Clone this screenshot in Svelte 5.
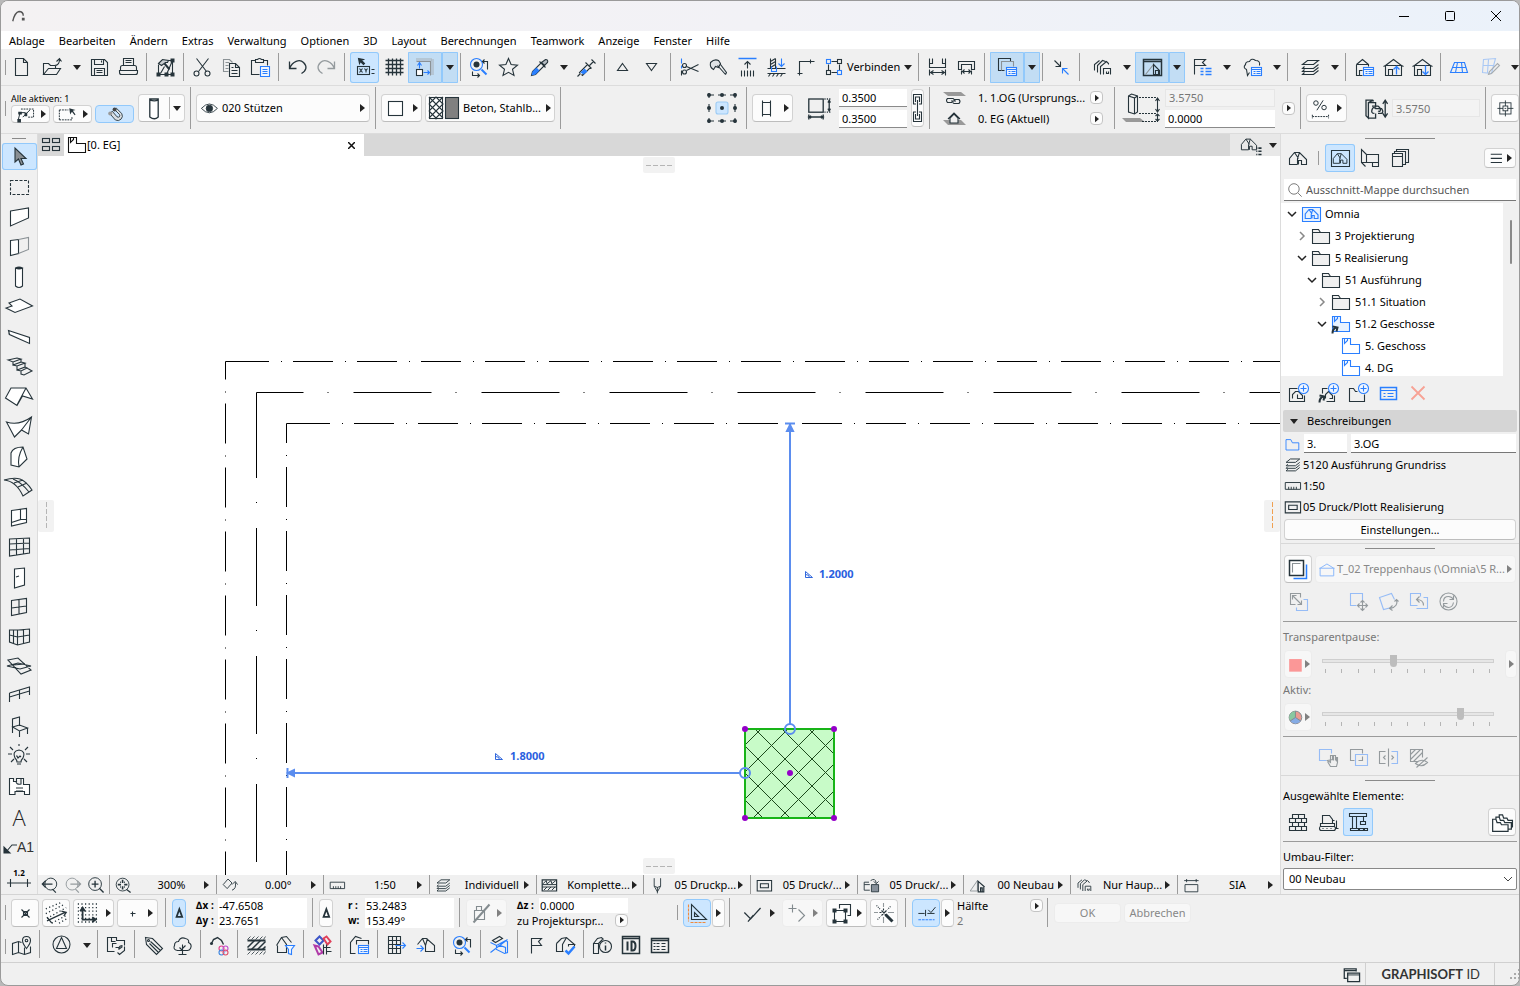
<script lang="ts">
  type Tool = { icon: string; drop?: boolean; active?: boolean; text?: string; off?: boolean };

  const menus = ['Ablage', 'Bearbeiten', 'Ändern', 'Extras', 'Verwaltung', 'Optionen', '3D', 'Layout', 'Berechnungen', 'Teamwork', 'Anzeige', 'Fenster', 'Hilfe'];

  const B = 'stroke="#2a7fff"';
  const BF = 'fill="#2a7fff" stroke="none"';
  const F = 'fill="currentColor" stroke="none"';
  const G = 'stroke="#8b9296"';

  const listBadge = `<rect x="9" y="10" width="10" height="8" fill="#f0f6ff" ${B}/><path d="M9 12h10M11 14h2m1 0h4M11 16h2m1 0h4" ${B}/>`;
  const house = '<path d="M2 8l8-6 8 6v10H2zM0 9l2-1M20 9l-2-1M2 8h16M5 18v-6h4v6"/>';
  const storey = '<path d="M1 2v15h17V8H9V2zM3 2v5l3-3V2"/>';
  const gable = '<path d="M9 16H1V10L6 4h5l7 7v5h-5v-4h-3v4M6 4l4 6M11 4l-2 6v6"/>';
  const plusBadge = `<circle cx="15" cy="5" r="5" fill="#f0f6ff" ${B}/><path d="M12 5h6M15 2v6" ${B}/>`;

  // inner markup of every 20 x 20 symbol
  const icons: Record<string, string> = {
    new: '<path d="M4 1h8l4 4v13H4zM12 1v4h4"/>',
    open: '<path d="M1 17V6h5l2 2h5v3M1 17l5-6h12l-4 6zM12 8c4 0 5-2 5-6M14 4l3-3 2 3"/>',
    save: '<path d="M2 2h13l3 3v13H2zM5 2v5h9V2M5 18v-7h10v7M12 3v2M7 13h6M7 15h6"/>',
    print: '<path d="M5 8V1h10v7M7 3h6M7 5h6M4 8h12q2 0 2 2v3H2v-3q0-2 2-2zM1 13h18v2q0 2-2 2H3q-2 0-2-2z"/>',
    build: `<path d="M3 7v10h14V3h-4M17 3l-6 14M9 9L5 16"/><path d="M3 6l4-4 6 1-1 2-2 0-4 3z" fill="#c9ced1"/><path d="M9 6l5 6" stroke-width="2"/><path d="M1 15h4v4H1zM9 15h4v4H9zM15 15h4v4h-4zM15 1h4v4h-4z" ${F}/>`,
    cut: '<path d="M4 1l10 13M16 1L6 14"/><circle cx="4" cy="16" r="2.5"/><circle cx="15" cy="16" r="2.5"/>',
    copy: `<path d="M7 14H2V2h6l3 3M4 5h4M4 8h3M4 11h3" ${G}/><path d="M8 6h6l4 4v9H8zM14 6v4h4M10 10h2M10 13h6M10 16h6"/>`,
    paste: `<path d="M9 17H1V3h4M13 3h4v5M5 5V2h2q2-2 4 0h2v3z"/><path d="M10 9h9v10h-9z" fill="#f0f6ff" ${B}/><path d="M12 12h5M12 14h5M12 16h5" ${B}/>`,
    undo: '<path d="M2 4v7h7M2 11C5 4 12 1 16 5s3 8-2 11" stroke-width="1.3"/>',
    redo: '<path d="M18 4v7h-7M18 11C15 4 8 1 4 5s-3 8 2 11" stroke-width="1.3"/>',
    xy: `<path d="M3 1l5 1-2 1 3 3-1 1-3-3-1 2z" fill="currentColor"/><rect x="2" y="9" width="12" height="8"/><path d="M4 11l3 4m0-4l-3 4M9 11l1.5 2 1.5-2M10.5 13v2M16 12h3M16 16h3"/>`,
    grid: '<path d="M4 1v17M8 1v17M12 1v17M16 1v17M1 3h18M1 7h18M1 11h18M1 15h18" stroke-width="1.3"/>',
    guide: `<path d="M1 2h16v15" stroke="#a7b0b6" stroke-width="3" stroke-dasharray="1 1"/><path d="M1 4h14v14" ${G}/><rect x="1" y="12" width="6" height="6" fill="#fff"/><path d="M4 11V5m-2 3l2-3 2 3M8 15h6m-2-2l2 2-2 2" ${B}/>`,
    find: `<circle cx="7" cy="7" r="6" ${B}/><circle cx="7" cy="7" r="3" ${F}/><path d="M12 12l5 5" ${B} stroke-width="2"/><path d="M13 4h5v8M15 2l-2 2 2 2M3 14v4h7M8 16l2 2-2 2"/>`,
    star: '<path d="M10 1l2.600 6 6.400.6-5 4.200 1.500 6.200-5.500-3.200L4.500 18 6 11.800l-5-4.200L7.400 7z"/>',
    pipette: `<path d="M2 18l1-4 9-9 3 3-9 9z"/><path d="M2 18l1-4 4-4 3 3-4 4z" ${BF}/><path d="M10 4l6 6M12 5l4-3q3 0 2 3l-3 3z" fill="#b5bcc2"/>`,
    syringe: `<path d="M1 19l3-3M4 16l-1-1 8-8 3 3-8 8-1-1M9 5l6 6M13 8l4-4M15 2l4 4"/><path d="M4 15l4-4 3 3-4 3z" ${BF}/>`,
    up: '<path d="M9 6l5 7H4z"/>',
    down: '<path d="M9 13l5-7H4z"/>',
    trim: `<path d="M2 1v5M2 8v3" ${B}/><path d="M2 13v5M19 7L7 13M19 14L7 9"/><circle cx="5" cy="14.500" r="2"/><circle cx="5" cy="8" r="2"/>`,
    axe: '<path d="M2 5q4-4 8-2l2 3-2 4-3-1-2 3q-4-2-3-7zM9 8l8 9M12 7l6 8-1 2" fill="#dfe3e6"/>',
    extend: `<path d="M1 1h18" ${B} stroke-width="1.5"/><path d="M10 4v7M7 7l3-3 3 3M4 13v6M7 13v6M10 13v6M13 13v6M16 13v6"/>`,
    adjust: `<path d="M4 1v10M9 1v10M4 4l5-3M4 7l5-3M4 10l5-3M1 11h18M1 16h18M2 19l2-3M6 19l2-3M10 19l2-3M14 19l2-3"/><path d="M15 1v8M12 6l3 3 3-3M5 9v5h5V9" ${B}/>`,
    corner: '<path d="M4 18V4h15M2 16h5M15 2v4"/>',
    connect: `<path d="M7 4h6M4 7v6M7 15h6M15 7v6"/><rect x="2" y="2" width="4" height="4" ${B}/><rect x="13" y="2" width="4" height="4"/><rect x="2" y="13" width="4" height="4"/><rect x="13" y="13" width="4" height="4" ${B}/>`,
    measure: '<path d="M2 1v9h16V1M2 6h3V1M15 1v5h3M2 12v6M18 12v6M3 15h14M6 13l-3 2 3 2M14 13l3 2-3 2"/>',
    measure2: '<path d="M2 12V4h16v8h-3V7H5v5zM5 13v4M15 13v4M6 14h8M8 12l-2 2 2 2M12 12l2 2-2 2"/>',
    traceref: `<path d="M7 13H1V1h12v3"/><path d="M4 13V4h12v5" ${G}/>${listBadge}`,
    compress: `<path d="M3 3l6 6M9 4v5H4"/><path d="M17 17l-6-6M11 16v-5h5" ${B}/>`,
    ghost: '<path d="M2 13V7l5-4M5 15V8l5-5 3 1M8 17V9l6-5 2 2v1M11 17v-6h7v6M14 14v2h2v-2"/>',
    home3d: `<path d="M1 2h18v16H1zM1 4h18" stroke-width="1.5"/><path d="M3 17l8-10v10" ${G}/><path d="M11 7l6 6v4h-6zM13 17v-4h3v4"/>`,
    flist: `<path d="M2 17V2h11l-3 3 3 3H2"/><path d="M8 11h3M13 11h6M8 14h3M13 14h6M8 17h3M13 17h6" ${B} stroke-width="1.5"/>`,
    cloud: `<path d="M7 15L5 18 4 12Q0 10 3 7q0-3 4-3 2-4 6-1 5 0 4 5"/>${listBadge}`,
    layers: '<path d="M2 7l5-4h11l-5 4zM4 9l-2 2h11l5-4M4 12l-2 2h11l5-4M4 15l-2 2h11l5-4"/>',
    hlist: `<path d="M2 7l6-5 6 5M2 7h12v2M2 7v11h6M5 18v-5h3"/>${listBadge}`,
    hup: house + `<path d="M13 17V9M10 12l3-3 3 3" ${B} stroke-width="1.3"/>`,
    hdown: house + `<path d="M13 8v9M10 14l3 3 3-3" ${B} stroke-width="1.3"/>`,
    plane: `<path d="M5 5h10l3 10H1zM3 10h14M8 5L6 15M12 5l1 10" ${B}/>`,
    plane2: `<path d="M3 2l12-1-4 15-9-1zM3 8h11M8 2L7 15" stroke="#a9c8f5"/><path d="M8 17l1-3 8-8 2 2-8 8z" stroke="#a8adb0"/>`,
    arrowbox: '<path d="M2 16l2-8h6M7 13l8-8"/><path d="M5 4h14v9h-6" stroke-dasharray="2 1"/><path d="M1 15h4v4H1zM2 7h4v3H2zM9 8h3v4H9z" fill="currentColor" stroke="none"/>',
    selectbox: '<path d="M1 5h10M1 16h14v-4M1 5v11" stroke-dasharray="2 1"/><path d="M12 3l7 2-3 1 3 4-1 1-3-4-2 3z" fill="currentColor" stroke="none"/>',
    magnet: '<path d="M3 9l3-3 6 7q2 1 3 0t0-3L9 4l2-2 7 7q2 4-1 7t-7 1z" fill="#d9dee2"/><circle cx="9" cy="4" r="2.5" fill="#444" stroke="none"/><circle cx="3.5" cy="9" r="2.5" fill="#999" stroke="none"/>',
    column: '<path d="M6 2v15q4 3 7 0V2zM6 3q4 1 7 0" fill="#fff"/>',
    eye: '<path d="M0 10q10-11 20 0-10 11-20 0z"/><circle cx="10" cy="10" r="4" fill="currentColor"/>',
    square: '<rect x="3" y="3" width="14" height="14" fill="#fff"/>',
    profile: '<path d="M6 2v16M14 2v16M6 4h8M6 16h8"/>',
    size: '<rect x="1" y="2" width="12" height="11"/><path d="M14 2h6M14 13h6" stroke-dasharray="1 1"/><path d="M18 3v9M17 5l1-2 1 2M17 10l1 2 1-2M1 17h12M1 15v4M13 15v4M3 16l-2 1 2 1M11 16l2 1-2 1"/>',
    percent: '<path d="M1 17v4M19 17v4M1 19h18" stroke-dasharray="2 1"/><path d="M6 12l7-11"/><circle cx="5" cy="4" r="2.5"/><circle cx="14" cy="9" r="2.5"/>',
    linkheight: '<path d="M2 3v13l2 2V5l4-2H2zM8 3v1M18 3v14M16 6l2-3 2 3M16 14l2 3 2-3M4 5h6v4M10 14v4H4M7 8h5q2 1 2 3t-2 1M9 14q-3 0-2-3t3-1h5q2 3 0 4h-3"/>',
    target: '<rect x="3" y="3" width="14" height="14"/><rect x="7" y="7" width="6" height="6"/><path d="M10 0v7M10 13v7M0 10h7M13 10h7M9 10h2"/>',
    tiles: '<rect x="1" y="3" width="7" height="4"/><rect x="11" y="3" width="7" height="4"/><rect x="1" y="11" width="7" height="4"/><rect x="11" y="11" width="7" height="4"/>',
    storey,
    storeyblue: `<g ${B}>${storey}</g>`,
    storeylink: `<g ${B} fill="#e8f2ff">${storey}</g><path d="M1 19q0-5 4-6M1 12l5 1-1 4" stroke-width="2"/>`,
    house: gable,
    housebox: `<path d="M1 2h18v16H1z"/><g transform="translate(2 2) scale(.8)" stroke-width="1.2">${gable}</g>`,
    mapview: `<g ${B}><path d="M1 3h18v14H1z" fill="#e8f2ff"/><g transform="translate(3 2) scale(.75)" stroke-width="1.5">${gable}</g></g>`,
    layout: '<path d="M6 6L1 1v13l4 4M1 14h5M6 6h12v12h-6v-4H6zM6 6v8M12 14h6"/>',
    stack: '<path d="M2 5h10v13H2zM2 8h10M4 5V3h11v13h-3M6 3V1h12v13h-3"/>',
    folder: '<path d="M1 17V3h6l2 3h9v11zM1 6h8" fill="#f0f0f0"/>',
    homelist: `<g transform="scale(.85)">${gable}</g><path d="M15 12h1m1 0h3M15 15h1m1 0h3M15 18h1m1 0h3" stroke-width="1.5"/>`,
    addview: `<path d="M9 5H1v13h15v-6"/><path d="M4 15v-4l3-3h3l4 4v3H9v-4"/>${plusBadge}`,
    addlink: `<path d="M9 5H4v5M8 18h8v-6M7 15v-4l3-3 4 4v3h-3"/><path d="M1 19q0-5 4-6M1 12l5 1-1 4" stroke-width="2"/>${plusBadge}`,
    addfolder: `<path d="M9 8H7L5 5H1v13h15v-7"/>${plusBadge}`,
    props: `<path d="M2 4h16v12H2z" ${B} stroke-width="1.5"/><path d="M2 7h16M5 10h2m2 0h6M5 13h2m2 0h6" ${B}/>`,
    cross: '<path d="M3 3l13 13M16 3L3 16" stroke="#f7a295" stroke-width="1.8"/>',
    storeytab: `<path d="M2 4h6l2 4h8v9H2z" ${B}/>`,
    ruler: '<path d="M1 6h18v8H1zM5 14v-3M8 14v-3M11 14v-3M14 14v-3"/>',
    frame: '<path d="M1 4h18v13H1zM5 8h10v5H5z" stroke-width="1.3"/>',
    trace: `<path d="M5 19h13V5" ${B} stroke-width="1.5"/><path d="M1 1h14v15H1z" fill="#fff" stroke-width="1.5"/><path d="M4 13V4h8" ${G}/>`,
    outline: `<path d="M2 17V8l8-5 8 5v9zM1 8h18" ${B}/>`,
    switchref: `<path d="M12 6V2H2v11h5M4 4l9 9M4 8V4h4M13 9v4H9"/><path d="M15 8h4v11H8v-3" ${B}/>`,
    moveref: `<path d="M8 14H2V2h12v7" ${B}/><path d="M14 9v10M9 14h10M12 11l2-2 2 2M12 17l2 2 2-2M11 12l-2 2 2 2M17 12l2 2-2 2"/>`,
    rotref: `<path d="M13 16l-8 2L1 6l12-4 3 6" ${B}/><path d="M18 8q2 7-6 9M16 10l2-2 2 2M14 14l-3 3 3 2"/>`,
    resetref: `<path d="M9 14H2V2h10v3M8 17h11V6h-4" ${B}/><path d="M15 14q0-6-7-6M11 5L8 8l3 3"/>`,
    refresh: '<circle cx="10" cy="10" r="8.5"/><path d="M5 10q0-5 5-5 3 0 5 3M15 4v4h-4M15 11q-1 5-5 5-3 0-5-3M5 16v-4h4"/>',
    swatch: '<path d="M3 4h14v14H3z" fill="#ff4a4a" stroke="none"/>',
    wheel: '<circle cx="10" cy="10" r="7" fill="#e0503f"/><path d="M10 10V3a7 7 0 0 0-6 10.500z" fill="#2fa35c" stroke="none"/><path d="M10 10l-6 3.500a7 7 0 0 0 12 0z" fill="#2a6fd8" stroke="none"/><path d="M10 3v7l-6 4M10 10l6 4"/>',
    grab: `<path d="M8 13H1V2h12v4" ${B}/><path d="M9 14l3 5h6l1-4V10h-1v4M17 13V8h-2v5M14 12V8h-2v7l-3-2z"/>`,
    overlap: `<path d="M6 13H2V2h12v4"/><path d="M7 7h12v11H7z" ${B}/><path d="M10 13h4V9"/>`,
    splitview: `<path d="M7 4H1v12h6M10 1v18M7 8l-2 2 2 2M13 8l2 2-2 2"/><path d="M13 4h6v12h-6" ${B}/>`,
    hidehatch: '<path d="M9 14H2V2h12v8M2 7l5-5M2 12L12 2M5 14l9-9M7 16q6-6 12-1-6 6-12 1zM8 20L19 10"/>',
    bricks: '<path d="M4 2h12v4H4zM1 6h17v4H1zM4 10h12v4H4zM1 14h17v4H1zM10 2v4M7 6v4M13 6v4M10 10v4M7 14v4M13 14v4"/>',
    digger: '<path d="M4 11V3h7l3 4v4M2 14v-3h14v3zM14 8h2M18 8v8h2M2 14h13q2 0 2 2t-2 2H3q-2 0-2-2t1-2zM4 16h1M8 16h1M12 16h1"/>',
    crane: '<path d="M1 1h17v3H1zM4 4v12M8 4v12M2 18h8v-2H2zM15 4v5M12 9h5v3h-5zM11 16h4v2h-4zM16 16h3v2h-3z"/>',
    storeys: '<path d="M1 18V7h3l1 3h3l1 2h6v6zM4 7V5h3l1 3h3l1 2h6v6h-3M7 5V3h3l1 3h3l1 2h4v6h-1"/>',
    zoomback: '<circle cx="11" cy="9" r="7"/><path d="M13 15l4 4M13 9H1M5 5L1 9l4 4" stroke-width="1.4"/>',
    zoomfwd: '<circle cx="9" cy="9" r="7"/><path d="M13 15l4 4M7 9h12M15 5l4 4-4 4" stroke-width="1.4"/>',
    zoomin: '<circle cx="9" cy="9" r="7.5"/><path d="M14 14l5 5M5 9h8M9 5v8" stroke-width="1.6"/>',
    zoomfit: '<circle cx="9" cy="9" r="8"/><path d="M14 15l5 4" stroke-width="1.6"/><path d="M9 3v4M9 11v4M3 9h4M11 9h4M6 6h1M11 6h1M6 12h1M11 12h1" stroke-width="2"/>',
    orient: '<path d="M7 2L1 9l5 5 6-7zM12 16q6-2 4-10M12 9l4-4 3 4"/>',
    hatchbox: '<path d="M1 3h18v14H1z" stroke-width="1.5"/><path d="M2 8l4-4 1 4 5-4 1 4 5-4M1 9h18M1 12h18M3 16l4-4M8 16l4-4M13 16l4-4" stroke-width="1.2"/>',
    pen: '<path d="M6 1v10l4 7 4-7V1M10 12v8M6 11q4 3 8 0"/>',
    override: '<path d="M8 16H1V6h6M1 9h7"/><path d="M10 9h9v9h-9z" fill="#87909a"/><path d="M9 4q6-4 7 3M13 5l3 3 3-3"/>',
    reno: `<path d="M1 17L10 4v13z" ${G}/><path d="M10 4l9 8M11 6v12h7v-6M14 18v-5h2v5" stroke-width="1.5"/>`,
    dims: '<path d="M2 9h16v9H2zM1 4h18M4 2v4M16 2v4"/>',
    snap: '<path d="M6 6l8 8M14 6l-8 8M8 8h4v4H8z"/>',
    snaplines: '<path d="M1 6l12-5M1 10l16-8M2 14l16-9M6 18l13-7M12 18l7-4" stroke-dasharray="1 2"/><path d="M2 16l15-7M2 13l4 5M14 8l4 1-2 3"/>',
    snapgrid: '<path d="M1 2h18M1 5h18M1 8h18M1 11h18M1 14h18M1 17h18" stroke-dasharray="1 2"/><path d="M5 6v9h10M3 8l2-3 2 3M13 13l3 2-3 2" stroke-width="1.5"/>',
    plus: '<path d="M10 8v5M8 10h5"/>',
    delta: '<path d="M10 4l4 11H6z" stroke-width="2.5"/>',
    lockpen: '<path d="M3 7h10v9H3zM5 7V3h5v4"/><path d="M2 19L18 1" stroke-width="2"/>',
    setsquare: '<path d="M1 1v17M3 19h16" stroke="#f08a3c" stroke-dasharray="3 1"/><path d="M4 1v15h15zM7 9v4h4z"/>',
    tick: '<path d="M1 9l7 7L19 4M5 19l6-7" stroke-width="1.4"/>',
    zigzag: '<path d="M5 1v8M1 5h8M11 6l6 6-6 6"/>',
    boxes: '<path d="M8 5V1h11v11h-3"/><path d="M3 7h11v11H3z"/><path d="M1 5h4v4H1zM12 5h4v4h-4zM1 16h4v4H1zM12 16h4v4h-4z" fill="currentColor" stroke="none"/>',
    wand: '<path d="M11 11l7 7" stroke-width="3"/><path d="M7 7l5 5M12 7l-5 5M9 5v2M5 9h2"/><path d="M9 0v4M2 2l4 4M0 9h4M3 16l3-3M9 19v-5M16 3l-3 3M19 9h-5" stroke-dasharray="1 1"/>',
    half: `<path d="M1 10h7M11 10h8M9 6v7M12 6l3 3 5-6"/><path d="M1 17h18" ${B} stroke-dasharray="3 1"/>`,
    mapbook: '<path d="M10 7L7 6 1 8v11l6-2 6 2 6-2v-6M7 6v11M13 12v7"/><path d="M15 13q-4-5-4-8 0-4 4-4t4 4q0 3-4 8z"/><circle cx="15" cy="5" r="1.3"/>',
    north: '<circle cx="9" cy="9" r="8.5"/><path d="M9 2l5 11H4z"/>',
    drawing: '<path d="M8 16H1V2h9v3h8v5M5 2v4h4M10 8H6v4M12 12h-3M12 13q1-3 4-3M11 17l2 2 5-4v-4M16 11l-4 3"/>',
    tag: '<path d="M2 2l7 1 10 10-6 6L3 9zM7 6l10 9M6 8l9 9"/><circle cx="5" cy="5" r="1"/>',
    tree: '<path d="M10 19V9M10 13l3-3M10 15l-3-3M5 15Q0 14 2 10q0-4 4-4 2-5 7-3 4 1 3 4 4 2 2 6-1 2-3 2zM6 19h8"/>',
    zoneflower: `<path d="M2 8l2-4 4-2 4 3 2 4" stroke-width="1.4"/><circle cx="2" cy="8" r="1.5" ${F}/><circle cx="12" cy="13" r="2.5" stroke="#e0408a"/><circle cx="16" cy="13" r="2.5" stroke="#c04fd0"/><circle cx="12" cy="17" r="2.5" stroke="#3a86e0"/><circle cx="16" cy="17" r="2.5" stroke="#e0506a"/>`,
    hatches: '<path d="M1 4l3-3M5 4l3-3M9 4l3-3M13 4l3-3M17 4l2-3M1 19l3-3M5 19l3-3M9 19l3-3M13 19l3-3M17 19l2-3" stroke-width=".8"/><path d="M1 5h18M1 14h18" stroke-width="1.8"/><path d="M1 12l7-7M5 14l9-9M11 14l8-8M16 14l3-3" stroke-width="1.5"/>',
    housefilter: `<path d="M1 10l5-8 5-1 5 6M6 2l5 7v8H2v-7"/><path d="M10 10h9l-3 4v5l-3-1v-4z" fill="#f0f6ff" ${B}/>`,
    cluster: '<path d="M3 5l4-4 4 4-4 4z" stroke="#3d55c8" stroke-width="2"/><path d="M11 3l3-2 4 5-3 3z" stroke="#e0405a" stroke-width="2"/><path d="M2 10l4 1 4 6-4 2z" stroke="#b03aa8" stroke-width="2"/><path d="M11 9v10M14 9v10M11 12h7M14 16h5"/>',
    boxlist: `<path d="M6 18H1V7l5-6 6 2M7 9V5h12v4"/>${listBadge}`,
    tableout: `<path d="M2 1h12v17H2zM2 5h12M2 9h12M2 13h12M6 1v17M10 1v17"/><path d="M9 10h10M16 7l3 3-3 3" ${B}/>`,
    homein: `<path d="M2 9l5-6h4l8 7v6h-9v-6L7 3M10 10l2-7"/><path d="M1 13h7M5 10l3 3-3 3" ${B}/>`,
    cutplane: `<path d="M3 5l7-4 3 2-7 4z"/><path d="M1 7l6 3 9-5 2 1v11l-3 1-8-4v-4M1 17L18 4M8 9l8 3v6" ${B}/>`,
    flag: '<path d="M5 18V3h10l-3 3 3 4H5"/>',
    housecheck: `<path d="M1 8l5-5 5-1 8 7h-6v2M1 8v8h7M11 2L7 9v7M19 9v2"/><path d="M10 15l3 3 6-7" ${B} stroke-width="2.5"/>`,
    info: '<path d="M1 8l4-5 4-1 2 2M1 8v10h5V8zM6 8l4-4"/><circle cx="13" cy="11" r="6" fill="#f0f0f0"/><path d="M13 10v5M13 7v1" stroke-width="1.5"/>',
    idbox: '<path d="M1 1h17v17H1zM1 3h17" stroke-width="1.5"/><path d="M6 6v9M10 6v9h1q3 0 3-4.500T11 6z" stroke-width="2"/>',
    listbox: '<path d="M1 3h17v14H1zM1 5h17" stroke-width="1.5"/><path d="M3 8h2m1 0h3m2 0h4M3 11h2m1 0h3m2 0h4M3 14h2m1 0h3m2 0h4"/>',
    windows: '<path d="M4 14H1V3h14v3M1 5h14" stroke-width="1.5"/><path d="M5 8h14v10H5z" stroke-width="1.5"/><path d="M5 10h14"/>',
    lens: '<circle cx="8" cy="8" r="7.5"/><path d="M14 14l5 5"/>',
    hamburger: '<path d="M2 4h16M2 10h16M2 16h16" stroke-width="1.5"/>',
    logo: '<path d="M2 17Q5 4 11 3q6 0 6 6" stroke-width="2" stroke="#555"/><path d="M15 12h4v4h-4z" fill="#555" stroke="none"/>',
  };

  // 30 x 30 symbols of the vertical toolbox
  const tools: [string, string][] = [
    ['Pfeil', '<path d="M11 6v14l3.500-3 2.500 6 2.500-1-2.500-5.500h5z" fill="#8a8f93"/>'],
    ['Markierung', '<path d="M6.500 8.500h18v14h-18z" stroke-dasharray="3 1.500"/>'],
    ['Wand', '<path d="M6.500 9l18-3v10l-18 8z" fill="#fff"/>'],
    ['Wandsystem', '<path d="M6.500 8.500l8-1v14l-8 2z" fill="#fff"/><path d="M14.500 7.500l10-2v12l-10 4" stroke="#8b9296"/>'],
    ['Stütze', '<path d="M11.500 6v18q3.500 3 7 0V6zM11.500 6q3.500 2 7 0-3.500-2-7 0" fill="#fff"/>'],
    ['Decke', '<path d="M5 11l11-4 12.500 7L11 20.500l-9-4.500 6-2z" fill="#fff"/>'],
    ['Unterzug', '<path d="M4.500 8.500l21 7v6l-20-9zM5 8.500v4" fill="#fff"/>'],
    ['Treppe', '<path d="M4 8l9-2 4 1-8 3zM9 10v3l8-3v-3M9 13l4 1 8-3-4-1M13 14v4l8-3v-4M13 18l4 1 6-3-2-1M17 19v3l3 1 8-4-5-3"/>'],
    ['Dach', '<path d="M7 6h15l6.500 11-10-3L13 23.500 1.500 16zM22 6l-9 17" fill="#fff"/>'],
    ['Schale', '<path d="M2.500 10Q15 14 27.500 5l-3 17-7-4-7 7zM17.500 18l10-13" fill="#fff"/>'],
    ['Schale 2', '<path d="M7 11q2-6 12-6l4 12-8 8-8-2zM15 25q-2-10 4-20" fill="#fff"/>'],
    ['Freifläche', '<path d="M0 8q10-3 16-1t12 11l-9 6Q12 9 0 8zM9 7q8 3 16 13M10 11l9-3M14 15l9-4"/>'],
    ['Öffnung', '<path d="M7.500 8.500l15-2v14l-15 3.500zM16.500 7.500v10l-9 3M16.500 17.500h6" fill="#fff"/>'],
    ['Fassade', '<path d="M5.500 7l20-1v15l-20 3zM5.500 12l20-1M5.500 18l20-1.500M12.500 7v16M19.500 6.500v15.500"/>'],
    ['Tür', '<path d="M10.500 7l10-1v17l-10 3z" fill="#fff"/><path d="M12 15l3-1"/>'],
    ['Fenster', '<path d="M7.500 8.500l15-2v14l-15 3zM15 7.500v14.500M7.500 16l15-2"/>'],
    ['Eckfenster', '<path d="M5.500 8h9l11-1v13l-12 3-8-3zM9.500 8v13M13.500 8v15M19.500 7v14M5.500 13l8 2 12-2"/>'],
    ['Dachfenster', '<path d="M4 8l10-2 13 12-10 4zM3 14l11-3 13 3-11 3zM9 13l12-1"/>'],
    ['Geländer', '<path d="M5.500 11l20-6v8M5.500 11v9M5.500 15l20-6M15.500 8v9"/>'],
    ['Objekt', '<path d="M8.500 21V7l7-2v9M8.500 15l7-2 8 3-8 3zM15.500 19v6M23.500 16v6"/>'],
    ['Lampe', '<path d="M13 20q0-2-2-4-3-7 4-8 7 1 4 8-2 2-2 4zM13 22h4M12 14h1l1 2 2-2 1 1M15 2v2M6 5l3 3M24 5l-3 3M4 12h4M22 12h4M7 20l3-3M23 20l-3-3"/>'],
    ['Raum', '<path d="M5.500 6.500h4v3h3v-3h7v6h6v10h-5v-3H11v3H5.500zM12 16h7M12 19h7M12 9q0 4 5 3V7" fill="#fff"/>'],
  ];

  const main: (Tool | '|')[] = [
    { icon: 'new' }, { icon: 'open', drop: true }, { icon: 'save' }, { icon: 'print' }, '|',
    { icon: 'build' }, '|', { icon: 'cut' }, { icon: 'copy' }, { icon: 'paste' }, '|',
    { icon: 'undo' }, { icon: 'redo', off: true }, '|', { icon: 'xy', active: true }, { icon: 'grid' },
    { icon: 'guide', drop: true, active: true }, '|', { icon: 'find' }, { icon: 'star' },
    { icon: 'pipette', drop: true }, { icon: 'syringe' }, '|', { icon: 'up' }, { icon: 'down' }, '|',
    { icon: 'trim' }, { icon: 'axe' }, { icon: 'extend' }, { icon: 'adjust' }, { icon: 'corner' },
    { icon: 'connect', text: 'Verbinden', drop: true }, '|', { icon: 'measure' }, { icon: 'measure2' }, '|',
    { icon: 'traceref', drop: true, active: true }, '|', { icon: 'compress' }, '|',
    { icon: 'ghost', drop: true }, { icon: 'home3d', drop: true, active: true }, { icon: 'flist', drop: true },
    { icon: 'cloud', drop: true }, '|', { icon: 'layers', drop: true }, '|',
    { icon: 'hlist' }, { icon: 'hup' }, { icon: 'hdown' }, '|', { icon: 'plane' }, { icon: 'plane2', drop: true },
  ];

  const extra: (Tool | '|')[] = [
    { icon: 'mapbook' }, '|', { icon: 'north', drop: true }, '|', { icon: 'drawing' }, '|',
    { icon: 'tag' }, { icon: 'tree' }, '|', { icon: 'zoneflower' }, '|', { icon: 'hatches' }, { icon: 'housefilter' }, '|',
    { icon: 'cluster' }, '|', { icon: 'boxlist' }, '|', { icon: 'tableout' }, { icon: 'homein' }, '|',
    { icon: 'find' }, '|', { icon: 'cutplane' }, '|', { icon: 'flag' }, { icon: 'housecheck' }, '|',
    { icon: 'info' }, { icon: 'idbox' }, { icon: 'listbox' },
  ];

  const quick = [
    ['zoomfit', '300%'], ['orient', '0.00°'], ['ruler', '1:50'], ['layers', 'Individuell'],
    ['hatchbox', 'Komplette...'], ['pen', '05 Druckp...'], ['frame', '05 Druck/...'], ['override', '05 Druck/...'],
    ['reno', '00 Neubau'], ['ghost', 'Nur Haup...'], ['dims', 'SIA'],
  ];

  const tree = [
    { depth: 0, open: true, icon: 'mapview', label: 'Omnia' },
    { depth: 1, open: false, icon: 'folder', label: '3 Projektierung' },
    { depth: 1, open: true, icon: 'folder', label: '5 Realisierung' },
    { depth: 2, open: true, icon: 'folder', label: '51 Ausführung' },
    { depth: 3, open: false, icon: 'folder', label: '51.1 Situation' },
    { depth: 3, open: true, icon: 'storeylink', label: '51.2 Geschosse' },
    { depth: 4, icon: 'storeyblue', label: '5. Geschoss' },
    { depth: 4, icon: 'storeyblue', label: '4. DG' },
  ];

  let search = $state('');
  let trace = $state(41);
  let aktiv = $state(82);
  let width = $state('0.3500');
  let depth = $state('0.3500');
  let topHeight = $state('3.5750');
  let offset = $state('0.0000');
</script>

{#snippet icon(name: string, size = 20)}
  <svg class="icon" width={size} height={size} viewBox="-.5 -.5 20 20" aria-hidden="true">{@html icons[name]}</svg>
{/snippet}

{#snippet right()}
  <svg class="tri" width="5" height="8" viewBox="0 0 5 8" aria-hidden="true"><path d="M0 0l5 4-5 4z" /></svg>
{/snippet}

{#snippet caret()}
  <svg class="tri" width="8" height="5" viewBox="0 0 8 5" aria-hidden="true"><path d="M0 0h8l-4 5z" /></svg>
{/snippet}

{#snippet toolRow(items: (Tool | '|')[])}
  {#each items as item}
    {#if item === '|'}
      <span class="sep"></span>
    {:else}
      <button class="tool" class:wide={item.drop && !item.text} class:text={item.text} class:active={item.active} class:off={item.off} aria-label={item.text ?? item.icon}>
        {@render icon(item.icon)}
        {#if item.text}<span>{item.text}</span>{/if}
      </button>
      {#if item.drop}
        <button class="drop" class:active={item.active} aria-label="{item.icon} Optionen">{@render caret()}</button>
      {/if}
    {/if}
  {/each}
{/snippet}

<div class="window">
  <header class="titlebar">
    <span class="logo">{@render icon('logo', 14)}</span>
    <div class="winbtns">
      <button aria-label="Minimieren"><svg width="10" height="10"><path d="M0 5.500h10" /></svg></button>
      <button aria-label="Maximieren"><svg width="10" height="10"><rect x=".5" y=".5" width="9" height="9" rx="1" /></svg></button>
      <button aria-label="Schliessen"><svg width="10" height="10"><path d="M0 0l10 10M10 0L0 10" /></svg></button>
    </div>
  </header>

  <nav class="menubar">
    {#each menus as m}<button>{m}</button>{/each}
  </nav>

  <div class="toolbar">
    <span class="grip"></span>
    {@render toolRow(main)}
  </div>

  <div class="infobar">
    <span class="grip"></span>
    <div class="sel">
      <span class="small">Alle aktiven: 1</span>
      <div class="row3">
        <button class="box low" aria-label="Auswahl">{@render icon('arrowbox', 18)}{@render right()}</button>
        <button class="box low" aria-label="Bereich">{@render icon('selectbox', 18)}{@render right()}</button>
        <button class="box low active" aria-label="Magnet">{@render icon('magnet', 16)}</button>
      </div>
    </div>
    <button class="box pillar" aria-label="Stütze">{@render icon('column', 24)}<i></i>{@render caret()}</button>
    <span class="line"></span>
    <button class="box layer">{@render icon('eye', 16)}<span>020 Stützen</span>{@render right()}</button>
    <span class="line"></span>
    <button class="box w41" aria-label="Darstellung">{@render icon('square')}{@render right()}</button>
    <button class="box beton">
      <svg class="icon" width="14" height="22" viewBox="0 0 14 22" aria-hidden="true">
        <rect x=".5" y=".5" width="13" height="21" fill="#fff" />
        <path d="M0 7l7-7 7 7-14 14M0 7l14 14M0 14L14 0M0 0l14 14-8 8M0 14l8 8" />
      </svg>
      <svg class="icon" width="14" height="22" viewBox="0 0 14 22" aria-hidden="true"><rect x=".5" y=".5" width="13" height="21" fill="#808080" /></svg>
      <span>Beton, Stahlb...</span>{@render right()}
    </button>
    <span class="line"></span>
    <svg class="icon anchor" width="32" height="32" viewBox="0 0 32 32" aria-hidden="true">
      <rect x="10" y="10" width="12" height="12" rx="2" fill="#cce6ff" stroke="#9ccbf5" />
      <path d="M3 3h5M12 3h8M24 3h5M3 29h5M12 29h8M24 29h5M3 1v5M29 1v5M3 12v8M29 12v8M3 26v5M29 26v5" />
      <g fill="currentColor" stroke="none">
        {#each [3, 16, 29] as x}{#each [3, 16, 29] as y}<circle cx={x} cy={y} r="2" />{/each}{/each}
      </g>
    </svg>
    <span class="line"></span>
    <button class="box w41" aria-label="Profil">{@render icon('profile')}{@render right()}</button>
    <span class="pad">{@render icon('size', 24)}</span>
    <div class="fields w68">
      <input aria-label="Breite" bind:value={width} />
      <input aria-label="Tiefe" bind:value={depth} />
    </div>
    <button class="box chain" aria-label="Verketten">
      <svg class="icon" width="9" height="30" viewBox="0 0 9 30" aria-hidden="true"><path d="M3 11H.5V1.500h8V11H6M3 19H.5v9.500h8V19H6M2.500 9V4h4v5M2.500 21v5h4v-5M4.500 7v16" /></svg>
    </button>
    <span class="line"></span>
    <div class="levels">
      <div><svg class="icon" width="23" height="14" viewBox="0 0 23 14" aria-hidden="true"><path d="M0 1h18l5 4H5z" fill="#999" stroke="none" /><path d="M9 11.500H4.500q-2-2 0-4H10q2 1 1 2.500H8M11 8.500h5q2 2 0 4h-5q-2-1-1-2.500h3" /></svg><span>1. 1.OG (Ursprungs...</span><button class="mini" aria-label="Ursprungsgeschoss">{@render right()}</button></div>
      <div><svg class="icon" width="23" height="14" viewBox="0 0 23 14" aria-hidden="true"><path d="M0 8h18l5 5H5z" fill="#999" stroke="none" /><path d="M7 11V6l4-4 4 4v5zM5 7l6-6 6 6" fill="#f0f0f0" /></svg><span>0. EG (Aktuell)</span><button class="mini" aria-label="Geschoss">{@render right()}</button></div>
    </div>
    <span class="line"></span>
    <svg class="icon heights" width="38" height="30" viewBox="0 0 38 30" aria-hidden="true">
      <path d="M0 25h18l5 4H4z" fill="#999" stroke="none" /><path d="M6.500 3l3-2 6 2v16l-3 2-6-2zM6.500 3l6 2v16M12.500 5l3-2" />
      <path d="M17 4.500h18M17 20.500h18M20 28.500h16" stroke-dasharray="2 1" /><path d="M35.500 5v14M33.500 8l2-3 2 3M33.500 16l2 3 2-3M35.500 21v7M33.500 23l2-2 2 2M33.500 26l2 2 2-2" />
    </svg>
    <div class="fields w110">
      <input class="dim" aria-label="Höhe" bind:value={topHeight} disabled />
      <input aria-label="Versatz" bind:value={offset} />
    </div>
    <button class="mini" aria-label="Höhen">{@render right()}</button>
    <span class="line"></span>
    <button class="box w41" aria-label="Prozent">{@render icon('percent', 18)}{@render right()}</button>
    <span class="pad link">{@render icon('linkheight', 24)}</span>
    <div class="fields w88"><input class="dim" aria-label="Verknüpfte Höhe" value="3.5750" disabled /></div>
    <span class="line"></span>
    <button class="box cut" aria-label="Ziel">{@render icon('target', 16)}</button>
  </div>

  <main class="work">
    <aside class="toolbox">
      <span class="handle short"></span>
      {#each tools as [name, markup], i}
        <button class:active={i === 0} aria-label={name}><svg class="icon" width="30" height="30" viewBox="0 0 30 30">{@html markup}</svg></button>
      {/each}
      <button class="big">A</button>
      <button class="label"><svg class="icon" width="13" height="14" viewBox="0 0 13 14" aria-hidden="true"><path d="M2 12l6-7h5" /><path d="M0 7v6h6z" fill="currentColor" /></svg>A1</button>
      <button class="dimtool">1.2<svg class="icon" width="24" height="8" viewBox="0 0 24 8" aria-hidden="true"><path d="M0 4h24M3.500 0v8M20.500 0v8" /></svg></button>
    </aside>

    <section class="center">
      <div class="tabs">
        <button class="overview" aria-label="Übersicht">{@render icon('tiles', 20)}</button>
        <div class="tab">{@render icon('storey', 20)}<span>[0. EG]</span><button aria-label="Tab schliessen"><svg width="7" height="7"><path d="M0 0l7 7M7 0L0 7" /></svg></button></div>
        <button class="tabmenu" aria-label="Ansichten">{@render icon('homelist', 21)}{@render caret()}</button>
      </div>

      <div class="canvas">
        <svg class="plan">
          <g class="wall">
            <path d="M191.500 205.500H187.500V223.500" />
            <path d="M191 205.500H3000" stroke-dasharray="40 12 1 11" />
            <path d="M187.500 247.500V3000" stroke-dasharray="40 12 1 11" />
            <path d="M187.500 235.500v1" />
            <path d="M218.500 236.500H3000" stroke-dasharray="78 24 1 25" stroke-dashoffset="31" />
            <path d="M218.500 236.500v8" />
            <path d="M218.500 244V3000" stroke-dasharray="78 24 1 25" />
            <path d="M252 267.500H248.500V287" />
            <path d="M252 267.500H3000" stroke-dasharray="40 12 1 11" />
            <path d="M248.500 299v1" />
            <path d="M248.500 311V3000" stroke-dasharray="40 12 1 11" />
          </g>
          <defs>
            <pattern id="cross" width="27" height="27" patternUnits="userSpaceOnUse" x="720" y="576">
              <path d="M0 0l27 27M27 0L0 27" stroke="#1c4a1c" fill="none" />
            </pattern>
          </defs>
          <rect x="707" y="573" width="89" height="89" fill="#c8fbc8" />
          <rect x="707" y="573" width="89" height="89" fill="url(#cross)" stroke="#18b418" stroke-width="2" />
          <g class="dimline">
            <path d="M752 268v300M747 267.500h10M249 617h453M249.500 612v10" />
            <circle cx="752" cy="573" r="5" />
            <circle cx="707" cy="617" r="5" />
            <path d="M752 269l3 6h-6zM250 617l6-3v6z" fill="#5b8def" />
            <path d="M767.500 415.500v6h7zM767.500 418.500q4 0 4 3M457.500 597.500v6h7zM457.500 600.500q4 0 4 3" class="thin" />
          </g>
          <g class="nodes">
            <circle cx="707" cy="573" r="3" /><circle cx="796" cy="573" r="3" /><circle cx="707" cy="662" r="3" /><circle cx="796" cy="662" r="3" /><circle cx="752" cy="617" r="3" />
          </g>
          <text x="781" y="422">1.2000</text>
          <text x="472" y="604">1.8000</text>
        </svg>
        <span class="dock top"></span>
        <span class="dock bottom"></span>
        <span class="dock left"></span>
        <span class="dock right"></span>
      </div>

      <div class="quick">
        <div class="zooms">
          <button aria-label="Zurück">{@render icon('zoomback', 17)}</button>
          <button class="off" aria-label="Vor">{@render icon('zoomfwd', 17)}</button>
          <button aria-label="Vergrössern">{@render icon('zoomin', 17)}</button>
        </div>
        {#each quick as [name, label]}
          <button class="cell">{@render icon(name, 16)}<span>{label}</span>{@render right()}</button>
        {/each}
      </div>
    </section>

    <aside class="panel">
      <span class="handle"></span>
      <div class="modes">
        <button aria-label="Projekt">{@render icon('house')}</button>
        <i></i>
        <button class="active" aria-label="Ausschnitte">{@render icon('housebox')}</button>
        <button aria-label="Layoutbuch">{@render icon('layout')}</button>
        <button aria-label="Publisher">{@render icon('stack')}</button>
        <button class="box menu" aria-label="Menü">{@render icon('hamburger', 14)}{@render right()}</button>
      </div>
      <label class="search">{@render icon('lens', 14)}<input aria-label="Suche" placeholder="Ausschnitt-Mappe durchsuchen" bind:value={search} /></label>
      <div class="treewrap">
        <ul class="tree">
          {#each tree as node}
            <li style="padding-left: {6 + node.depth * 10}px">
              <svg class="chev" class:closed={node.open === false} width="10" height="10" viewBox="0 0 10 10" aria-hidden="true">
                {#if node.open}<path d="M1 3l4 4 4-4" />{:else if node.open === false}<path d="M3 1l4 4-4 4" />{/if}
              </svg>
              {@render icon(node.icon, 20)}<span>{node.label}</span>
            </li>
          {/each}
        </ul>
        <span class="thumb"></span>
      </div>
      <div class="icons30 tall">
        {#each ['addview', 'addlink', 'addfolder', 'props', 'cross'] as name}<button aria-label={name}>{@render icon(name)}</button>{/each}
      </div>
      <button class="section">{@render caret()}Beschreibungen</button>
      <div class="ident">{@render icon('storeytab', 16)}<input class="num" aria-label="Nummer" value="3." /><input aria-label="Name" value="3.OG" /></div>
      <div class="prop">{@render icon('layers', 17)}5120 Ausführung Grundriss</div>
      <div class="prop">{@render icon('ruler', 17)}1:50</div>
      <div class="prop">{@render icon('frame', 17)}05 Druck/Plott Realisierung</div>
      <button class="box settings">Einstellungen...</button>
      <div class="split"></div>
      <span class="handle"></span>
      <div class="ref">
        <button class="box sq" aria-label="Transparentpause">{@render icon('trace')}</button>
        <button class="box name" disabled>{@render icon('outline', 17)}<span>T_02 Treppenhaus (\Omnia\5 R...</span>{@render right()}</button>
      </div>
      <div class="icons30 off">
        <button aria-label="Wechseln">{@render icon('switchref')}</button><span class="gap30"></span>
        {#each ['moveref', 'rotref', 'resetref', 'refresh'] as name}<button aria-label={name}>{@render icon(name)}</button>{/each}
      </div>
      <hr />
      <label class="cap dimmed" for="trace">Transparentpause:</label>
      <div class="slide">
        <button class="box sq" disabled aria-label="Farbe">{@render icon('swatch', 18)}{@render right()}</button>
        <div class="range"><input id="trace" type="range" bind:value={trace} disabled /></div>
        <button class="box thin" disabled aria-label="Mehr">{@render right()}</button>
      </div>
      <label class="cap dimmed" for="aktiv">Aktiv:</label>
      <div class="slide">
        <button class="box sq" disabled aria-label="Farben">{@render icon('wheel', 18)}{@render right()}</button>
        <div class="range"><input id="aktiv" type="range" bind:value={aktiv} disabled /></div>
        <span class="thin"></span>
      </div>
      <hr />
      <div class="icons30 off">
        <span class="gap30"></span>
        {#each ['grab', 'overlap', 'splitview', 'hidehatch'] as name}<button aria-label={name}>{@render icon(name)}</button>{/each}
      </div>
      <div class="split low"></div>
      <span class="handle"></span>
      <span class="cap">Ausgewählte Elemente:</span>
      <div class="modes">
        <button aria-label="Bestand">{@render icon('bricks')}</button>
        <button aria-label="Abbruch">{@render icon('digger')}</button>
        <button class="active" aria-label="Neubau">{@render icon('crane')}</button>
        <button class="box sq end" aria-label="Geschosse">{@render icon('storeys', 22)}</button>
      </div>
      <hr />
      <label class="cap" for="filter">Umbau-Filter:</label>
      <div class="filter">
        <select id="filter"><option>00 Neubau</option></select>
        <svg width="10" height="6" viewBox="0 0 10 6" aria-hidden="true"><path d="M1 1l4 4 4-4" /></svg>
      </div>
    </aside>
  </main>

  <div class="coords">
    <span class="grip"></span>
    <button class="box sq" aria-label="Raster aus">{@render icon('snap')}</button>
    <button class="box sq" aria-label="Hilfslinien">{@render icon('snaplines', 24)}</button>
    <button class="box w41" aria-label="Raster">{@render icon('snapgrid', 24)}{@render right()}</button>
    <button class="box w41" aria-label="Punkt">{@render icon('plus')}{@render right()}</button>
    <span class="line"></span>
    <button class="box thin active" aria-label="Delta xy">{@render icon('delta', 14)}</button>
    <div class="pair"><label><b>∆x :</b><input value="-47.6508" /></label><label><b>∆y :</b><input value="23.7651" /></label></div>
    <span class="line"></span>
    <button class="box thin" aria-label="Delta rw">{@render icon('delta', 14)}</button>
    <div class="pair polar"><label><b>r :</b><input value="53.2483" /></label><label><b>w:</b><input value="153.49°" /></label></div>
    <span class="line"></span>
    <button class="box w41" disabled aria-label="Sperre">{@render icon('lockpen')}{@render right()}</button>
    <div class="pair z"><label><b>∆z :</b><input value="0.0000" /></label><div class="origin">zu Projekturspr...<button class="mini" aria-label="Ursprung">{@render right()}</button></div></div>
    <span class="grip far"></span>
    <button class="box sq active" aria-label="Führung">{@render icon('setsquare')}</button>
    <button class="box thin" aria-label="Führung Optionen">{@render right()}</button>
    <span class="line"></span>
    <button class="flat" aria-label="Bestätigen">{@render icon('tick', 18)}{@render right()}</button>
    <button class="box w41" disabled aria-label="Knick">{@render icon('zigzag')}{@render right()}</button>
    <button class="box w41" aria-label="Kontur">{@render icon('boxes')}{@render right()}</button>
    <button class="box sq" aria-label="Zauberstab">{@render icon('wand')}</button>
    <span class="line"></span>
    <button class="box sq active" aria-label="Teilung">{@render icon('half', 18)}</button>
    <button class="box thin" aria-label="Teilung Optionen">{@render right()}</button>
    <div class="half"><span>Hälfte</span><span class="dimmed">2</span></div>
    <button class="mini raised" aria-label="Teiler">{@render right()}</button>
    <span class="line"></span>
    <button class="box ok" disabled>OK</button>
    <button class="box ok" disabled>Abbrechen</button>
  </div>

  <div class="toolbar lower">
    <span class="grip"></span>
    {@render toolRow(extra)}
  </div>

  <footer>
    <button aria-label="Fenster">{@render icon('windows', 17)}</button>
    <a href="#id"><b>GRAPHISOFT</b> ID</a>
    <span class="resize"></span>
  </footer>
</div>

<style>
  :global(body) { margin: 0; background: #b9b9b9; }

  .window {
    --ink: #26343b;
    --line: #9b9b9b;
    box-sizing: border-box;
    height: 100vh;
    display: flex;
    flex-direction: column;
    overflow: hidden;
    background: #f0f0f0;
    border: 1px solid #9a9a9a;
    border-radius: 8px;
    font: 11px/16px 'Noto Sans', 'Open Sans', sans-serif;
    color: #000;
  }

  .window * { box-sizing: border-box; }

  button {
    font: inherit;
    color: inherit;
    background: none;
    border: 0;
    padding: 0;
    display: flex;
    align-items: center;
    justify-content: center;
    flex: none;
    white-space: nowrap;
  }

  input { font: inherit; color: inherit; border: 0; min-width: 0; padding: 0 3px; }

  .icon { fill: none; stroke: currentColor; stroke-width: 1.1; color: var(--ink); flex: none; display: block; overflow: visible; }
  .tri { fill: #222; flex: none; }
  .off { opacity: 0.45; }
  .dimmed { color: #777; }

  .active { background: #cce6ff; box-shadow: inset 0 0 0 1px #92c9fb; border-radius: 3px; }

  .titlebar {
    height: 30px;
    flex: none;
    display: flex;
    align-items: center;
    justify-content: space-between;
    background: linear-gradient(90deg, #f4f2f3 0%, #f2f2f6 50%, #ebf2fa 100%);
    padding-left: 10px;
  }
  .winbtns { display: flex; }
  .winbtns button { width: 46px; height: 30px; }
  .winbtns svg { fill: none; stroke: #000; overflow: visible; }

  .menubar { height: 18px; flex: none; display: flex; align-items: center; background: #fff; padding: 2px 0 0 8px; gap: 14px; }

  .toolbar { height: 37px; flex: none; display: flex; align-items: center; border-bottom: 1px solid #dcdcdc; overflow: hidden; }
  .lower { height: 33px; border-bottom-color: #d0d0d0; align-items: flex-start; }
  .grip { width: 1px; height: 15px; background: #999; margin-left: 4px; flex: none; align-self: center; }
  .tool { width: 29px; height: 31px; gap: 3px; }
  .tool.wide { width: 34px; }
  .tool.text { width: auto; padding: 0 0 0 5px; }
  .drop { width: 16px; height: 31px; }
  .lower .tool, .lower .drop { height: 30px; }
  .toolbar .active { background: #c2ddf4; border-radius: 1px; }
  .toolbar .tool.active:not(.wide) { background: #cce6ff; border-radius: 3px; }
  .sep { width: 1px; height: 28px; background: var(--line); margin: 0 3px 0 4px; flex: none; }
  .sep + .active, .sep + .wide { margin-left: 2px; }
  .drop + .sep { margin-left: 2px; }
  .drop + .tool:not(.wide) { margin-left: -1px; }

  .infobar { height: 48px; flex: none; display: flex; align-items: center; border-bottom: 1px solid #dcdcdc; padding-bottom: 3px; overflow: hidden; }
  .infobar > .grip { margin-right: 5px; }
  .line { width: 1px; height: 42px; background: var(--line); margin: 0 5px; flex: none; }
  .box { background: #fcfcfc; border: 1px solid #d2d2d2; border-bottom-color: #bdbdbd; border-radius: 4px; height: 28px; }
  .box.active { background: #cce6ff; border-color: #92c9fb; box-shadow: none; }
  .box:disabled { background: #f7f7f7; border-color: #ececec; color: #888; }
  .box:disabled .icon, .box:disabled .tri { opacity: 0.55; }
  .w41 { width: 41px; gap: 8px; margin-right: 3px; }
  .sel { display: flex; flex-direction: column; }
  .small { font-size: 9px; line-height: 12px; }
  .row3 { display: flex; gap: 3px; }
  .box.low { width: 39px; height: 18px; gap: 7px; }
  .pillar { width: 47px; margin: 0 0 0 4px; gap: 3px; align-self: center; }
  .pillar i { width: 1px; height: 22px; background: #b5b5b5; }
  .layer { width: 174px; padding: 0 4px; gap: 5px; }
  .layer span, .beton span { flex: 1; text-align: left; }
  .beton { width: 130px; padding: 0 3px; gap: 2px; }
  .beton span { padding-left: 2px; }
  .anchor { margin-left: auto; }
  .anchor + .line { margin-left: 8px; }
  .pad { padding: 0 8px 0 11px; flex: none; }
  .pad.link { padding: 0 5px 0 13px; }
  .fields { display: flex; flex-direction: column; gap: 3px; flex: none; }
  .fields input { height: 18px; background: #fff; border-bottom: 1px solid #8a8a8a; width: 100%; }
  .fields .dim { background: #f3f3f3; border: 1px solid #e6e6e6; color: #777; }
  .w68 { width: 68px; }
  .w110 { width: 110px; margin-right: 7px; }
  .w88 { width: 88px; }
  .chain { width: 13px; height: 38px; margin-left: 4px; }
  .levels { width: 174px; padding: 0 6px 0 8px; flex: none; }
  .levels div { display: flex; align-items: center; height: 21px; }
  .levels .icon { margin-right: 12px; }
  .levels span { flex: 1; white-space: nowrap; }
  .mini { width: 13px; height: 13px; border: 1px solid #c4c4c4; border-radius: 4px; background: #fcfcfc; }
  .mini .tri { width: 4px; }
  .heights { margin: 0 5px 0 2px; }
  .cut { width: 28px; }

  .work { flex: 1; min-height: 0; display: flex; border-bottom: 1px solid #d4d4d4; }

  .toolbox { width: 37px; flex: none; display: flex; flex-direction: column; align-items: center; border-right: 1px solid #dcdcdc; }
  .handle { width: 70px; height: 1px; background: #8a8a8a; margin: 4px auto; flex: none; }
  .handle.short { width: 14px; margin: 4px 0 3px; }
  .toolbox button { width: 35px; height: 30px; }
  .toolbox button.active { height: 27px; margin: 1px 0 2px; }
  .toolbox .big { font: 300 22px/30px 'Open Sans', sans-serif; color: #222; }
  .toolbox .label { font: 400 14px/20px 'Liberation Sans', sans-serif; color: #333; gap: 0; }
  .toolbox .dimtool { flex-direction: column; font: 700 8px/10px 'Open Sans', sans-serif; gap: 1px; }

  .center { flex: 1; min-width: 0; display: flex; flex-direction: column; }
  .tabs { height: 22px; flex: none; display: flex; background: #d8d8d8; }
  .overview { width: 26px; background: #d8d8d8; }
  .tab { width: 300px; background: #fff; display: flex; align-items: center; padding: 0 9px 0 3px; }
  .tab span { flex: 1; }
  .tab svg { stroke: #111; stroke-width: 1.5; }
  .tab .icon { stroke-width: 1.1; }
  .tabmenu { margin-left: auto; width: 50px; gap: 8px; background: #e8e8e8; padding-left: 6px; }

  .canvas { flex: 1; min-height: 0; position: relative; background: #fff; overflow: hidden; }
  .plan { position: absolute; inset: 0; width: 100%; height: 100%; }
  .wall { stroke: #000; fill: none; }
  .dimline { stroke: #5b8def; fill: none; stroke-width: 2; }
  .dimline .thin { stroke-width: 1; stroke: #2f66dc; }
  .nodes { fill: #9400c8; }
  .plan text { font-weight: 700; fill: #2a5fe0; font-size: 11px; }
  .dock { position: absolute; background: #f2f2f2; display: flex; align-items: center; justify-content: center; border-radius: 2px; }
  .dock::before { content: ''; width: 100%; height: 100%; background: repeating-linear-gradient(90deg, #b5b5b5 0 5px, transparent 5px 7px) center / 27px 1px no-repeat; }
  .dock.top, .dock.bottom { left: calc(50% - 16px); width: 32px; height: 16px; }
  .dock.top { top: 1px; }
  .dock.bottom { bottom: 1px; }
  .dock.left, .dock.right { top: calc(50% - 16px); width: 16px; height: 32px; }
  .dock.left { left: 0; }
  .dock.right { right: 0; }
  .dock.left::before { background: repeating-linear-gradient(#b5b5b5 0 5px, transparent 5px 7px) center / 1px 27px no-repeat; }
  .dock.right::before { background: repeating-linear-gradient(#f0a050 0 5px, transparent 5px 7px) center / 1px 27px no-repeat; }

  .quick { height: 19px; flex: none; display: flex; background: #f0f0f0; }
  .zooms { width: 71px; display: flex; align-items: center; gap: 6px; padding-left: 3px; flex: none; }
  .cell { flex: 1 1 0; border-left: 1px solid var(--line); padding: 0 7px 0 5px; gap: 2px; min-width: 0; }
  .cell:last-child { flex: 0 0 103px; }
  .cell span { flex: 1; text-align: center; margin-left: 8px; }

  .panel { width: 239px; flex: none; border-left: 1px solid #dcdcdc; padding: 0 2px; display: flex; flex-direction: column; }
  .modes { display: flex; align-items: center; height: 30px; flex: none; }
  .modes button:not(.box) { width: 30px; height: 28px; }
  .modes i { width: 1px; height: 14px; background: var(--line); margin: 0 6px 0 5px; }
  .modes .menu { width: 32px; height: 20px; margin: 0 1px 0 auto; gap: 4px; }
  .modes .end { margin: 0 1px 0 auto; width: 28px; }
  .search { height: 22px; margin: 6px 1px 2px; display: flex; align-items: center; gap: 4px; background: #fff; border-bottom: 1px solid #777; padding-left: 4px; flex: none; }
  .search input { flex: 1; background: none; padding: 0; }
  .search input::placeholder { color: #555; opacity: 1; }
  .search .icon { color: #555; }
  .treewrap { display: flex; margin-left: -2px; height: 173px; flex: none; }
  .tree { flex: 1; margin: 0; padding: 0; list-style: none; background: #fff; overflow: hidden; }
  .tree li { display: flex; align-items: center; height: 22px; gap: 4px; }
  .chev { fill: none; stroke: #222; stroke-width: 1.5; }
  .chev.closed { stroke: #888; }
  .thumb { width: 2px; height: 44px; background: #8a8a8a; margin: 17px 5px 0 7px; border-radius: 1px; }
  .icons30 { display: flex; height: 32px; flex: none; align-items: center; }
  .icons30 button, .gap30 { width: 30px; height: 28px; }
  .icons30.tall { height: 34px; }
  .section { height: 22px; justify-content: flex-start; gap: 9px; background: #d5d5d5; padding-left: 7px; border-radius: 2px; }
  .ident { display: flex; align-items: center; gap: 4px; height: 22px; padding: 1px 1px 0; flex: none; }
  .ident input { height: 19px; background: #fff; border-bottom: 1px solid #777; flex: 1; }
  .ident .num { flex: none; width: 43px; }
  .prop { display: flex; align-items: center; gap: 2px; height: 21px; flex: none; padding-left: 1px; }
  .settings { height: 21px; margin: 2px 1px 3px; }
  .split { height: 1px; background: #d8d8d8; flex: none; margin: 0 -2px; }
  .split.low { margin-top: 2px; }
  .ref { display: flex; gap: 3px; padding: 2px 1px; flex: none; }
  .ref .name { flex: 1; padding: 0 3px 0 2px; gap: 2px; min-width: 0; }
  .name span { flex: 1; text-align: left; }
  .sq { width: 28px; gap: 1px; }
  hr { width: 100%; border: 0; height: 1px; background: var(--line); margin: 4px 0; flex: none; }
  .cap { line-height: 22px; flex: none; }
  .slide { display: flex; align-items: center; padding: 0 1px; height: 31px; flex: none; }
  .range { flex: 1; padding: 0 11px 0 10px; }
  .range input {
    appearance: none;
    width: 100%;
    height: 18px;
    margin: 0;
    padding: 0;
    display: block;
    background:
      linear-gradient(#e6e6e6, #e6e6e6) 1px 5px / calc(100% - 2px) 2px no-repeat,
      linear-gradient(#cfcfcf, #cfcfcf) 0 4px / 100% 4px no-repeat,
      repeating-linear-gradient(90deg, #b5b5b5 0 1px, transparent 1px 9.9%) 3px 14px / calc(100% - 6px) 4px no-repeat;
  }
  .range input::-webkit-slider-thumb { appearance: none; width: 7px; height: 12px; background: #bdbdbd; border-radius: 0 0 4px 4px; margin-top: -6px; }
  .slide .thin { margin-right: -1px; width: 12px; }
  .filter { display: flex; position: relative; flex: none; }
  .filter select { appearance: none; width: 100%; height: 22px; font: inherit; color: #000; background: #fff; border: 1px solid #888; border-radius: 2px; padding: 0 5px; }
  .filter svg { position: absolute; right: 4px; top: 8px; fill: none; stroke: #444; }

  .coords { height: 35px; flex: none; display: flex; align-items: center; overflow: hidden; }
  .coords .grip { margin-right: 5px; }
  .coords .sq { margin-right: 3px; }
  .coords .w41 { gap: 6px; }
  .coords .line { height: 29px; margin: 0 6px 0 4px; }
  .coords .thin { width: 14px; height: 28px; }
  .coords .sq + .thin { width: 13px; margin-left: -2px; }
  .pair { width: 111px; margin: 0 1px 0 10px; line-height: 15px; flex: none; }
  .pair label { display: flex; }
  .pair b { width: 22px; flex: none; font-size: 10px; }
  .polar b { padding-left: 5px; }
  .pair input { flex: 1; height: 15px; background: #fff; padding: 0 1px; }
  .z { margin-left: 7px; }
  .origin { display: flex; justify-content: space-between; align-items: center; white-space: nowrap; height: 15px; }
  .coords .far { margin-left: 48px; }
  .flat { width: 46px; gap: 9px; }
  .half { display: flex; flex-direction: column; width: 76px; padding-left: 3px; line-height: 15px; flex: none; }
  .raised { align-self: flex-start; margin-top: 4px; }
  .ok { width: 67px; height: 20px; margin-right: 3px; }

  footer { height: 22px; flex: none; display: flex; align-items: center; justify-content: flex-end; }
  footer button { padding: 0 5px 0 0; }
  footer a { height: 22px; line-height: 22px; border: solid #d0d0d0; border-width: 0 1px; padding: 0 14px 0 16px; color: #333; text-decoration: none; font-family: Lato, sans-serif; font-size: 13px; }
  footer a b { font-weight: 700; }
  .resize { width: 24px; height: 12px; background: radial-gradient(#aaa 1px, transparent 1px) right 2px top 0 / 4px 4px; clip-path: polygon(100% 0, 100% 100%, 50% 100%); }
</style>
